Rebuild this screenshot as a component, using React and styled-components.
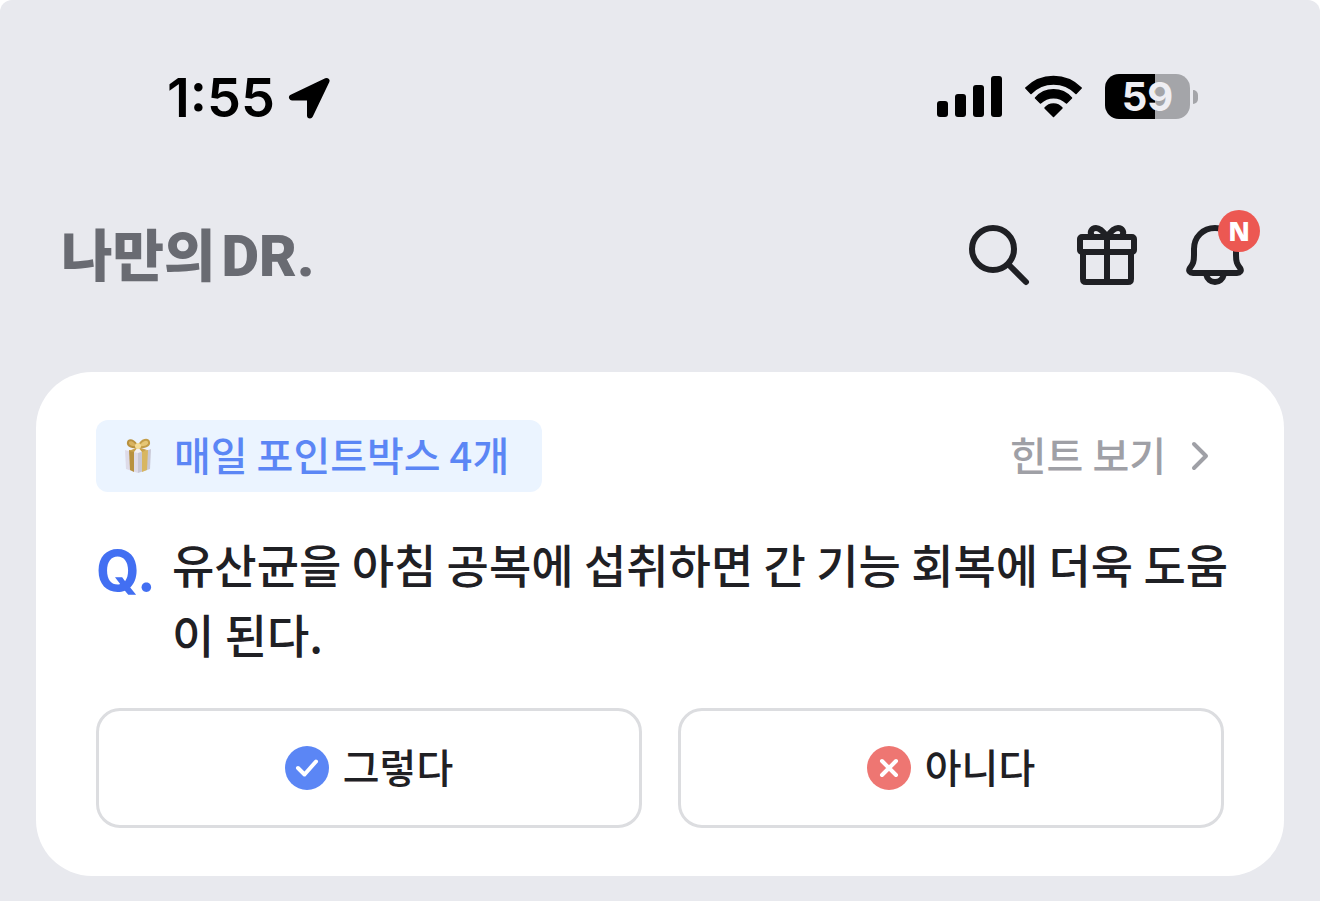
import React from "react";
import styled, { createGlobalStyle } from "styled-components";

const GlobalStyle = createGlobalStyle`
  * { box-sizing: border-box; }
  html { background: #ffffff; }
  body {
    margin: 0;
    font-family: "Noto Sans CJK KR", "Noto Sans", sans-serif;
    color: #1f2024;
  }
  button, a { font-family: inherit; color: inherit; }
`;

const Screen = styled.div`
  min-height: 100vh;
  padding-bottom: 24px;
  background: #e8e9ee;
  border-radius: 12px 12px 0 0;
`;

const StatusBar = styled.div`
  display: flex;
  align-items: flex-start;
  justify-content: space-between;
  padding: 74px 122px 0 167px;
  color: #000000;
`;

const StatusGroup = styled.div`
  display: flex;
  align-items: center;
  gap: ${(p) => p.$gap}px;
`;

const Time = styled.time`
  font: 600 54px/48px Inter, sans-serif;
`;

const Battery = styled.div`
  display: flex;
  align-items: center;
  gap: 3px;
`;

const BatteryBody = styled.div`
  width: 85px;
  border-radius: 14px;
  background: linear-gradient(to right, #000000 59%, #a4a5a9 59%);
  color: #eeeef3;
  font: 700 40px/45px Inter, sans-serif;
  text-align: center;
`;

const BatteryTip = styled.div`
  width: 5px;
  height: 14px;
  border-radius: 0 6px 6px 0;
  background: #a4a5a9;
`;

const Header = styled.header`
  display: flex;
  align-items: center;
  justify-content: space-between;
  height: 72px;
  margin-top: 97px;
  padding: 0 69px 0 61px;
`;

const Wordmark = styled.a`
  display: flex;
  align-items: baseline;
  gap: 6px;
  padding-bottom: 2px;
  color: #696b72;
  text-decoration: none;
  font-size: 56px;
  line-height: 66px;
  font-weight: 900;
`;

const WordmarkLatin = styled.span`
  font-family: Roboto, sans-serif;
  font-size: 58px;
`;

const Actions = styled.nav`
  display: flex;
  gap: 36px;
`;

const IconButton = styled.button`
  position: relative;
  width: 72px;
  height: 72px;
  padding: 0;
  border: 0;
  background: none;
`;

const StrokeIcon = styled.svg`
  display: block;
  fill: none;
  stroke: #1f2024;
  stroke-width: 6;
  stroke-linecap: round;
  stroke-linejoin: round;
`;

const Badge = styled.span`
  position: absolute;
  top: -9px;
  right: -9px;
  width: 42px;
  border-radius: 50%;
  background: #ec5852;
  color: #ffffff;
  font: 800 26px/42px "Open Sans", sans-serif;
  text-align: center;
`;

const Card = styled.main`
  margin: 81px 36px 0;
  padding: 48px 60px;
  border-radius: 56px;
  background: #ffffff;
`;

const CardTop = styled.div`
  display: flex;
  align-items: center;
  justify-content: space-between;
`;

const Label = styled.span`
  padding-bottom: 4px;
  font-size: 40px;
  line-height: 68px;
  font-weight: 500;
`;

const Chip = styled.div`
  display: flex;
  align-items: center;
  gap: 22px;
  padding: 0 33px 0 28px;
  border-radius: 12px;
  background: #ebf4ff;
  color: #5b86f5;
`;

const HintLink = styled.a`
  && { color: #9fa0a6; }
  display: flex;
  align-items: center;
  gap: 24px;
  padding-right: 14px;
  text-decoration: none;
`;

const Question = styled.div`
  display: flex;
  gap: 20px;
  margin: 36px -8px 40px 0;
`;

const QuestionMark = styled.span`
  width: 56px;
  color: #426ff2;
  font: 700 56px/86px Inter, sans-serif;
`;

const QuestionText = styled.h1`
  flex: 1;
  margin: 0;
  font-size: 46px;
  line-height: 70px;
  font-weight: 500;
  word-break: break-all;
`;

const Options = styled.div`
  display: grid;
  grid-template-columns: 1fr 1fr;
  gap: 36px;
`;

const OptionButton = styled.button`
  display: flex;
  align-items: center;
  justify-content: center;
  gap: 14px;
  height: 120px;
  padding: 0;
  border: 3px solid #dcdde0;
  border-radius: 24px;
  background: #ffffff;
`;

const ArrowGlyph = () => (
  <svg width="44" height="44" viewBox="0 0 44 44" aria-hidden="true">
    <path d="M39.5 5 L5 21.5 H23 V39.5 Z" stroke="#000" strokeWidth="6" strokeLinejoin="round" />
  </svg>
);

const SignalGlyph = () => (
  <svg width="65" height="41" viewBox="0 0 65 41" aria-hidden="true">
    <rect x="0" y="25" width="11" height="16" rx="3" />
    <rect x="18" y="18" width="11" height="23" rx="3" />
    <rect x="36" y="9" width="11" height="32" rx="3" />
    <rect x="54" y="0" width="11" height="41" rx="3" />
  </svg>
);

const WifiGlyph = () => (
  <svg width="57" height="43" viewBox="0 0 57 43" stroke="#000" strokeWidth="1.500" strokeLinejoin="round" aria-hidden="true">
    <path d="M.8 13 A39 39 0 0 1 56.2 13 L51 18.4 A31.5 31.5 0 0 0 6 18.4 Z" />
    <path d="M10.5 23 A24 24 0 0 1 46.5 23 L41.5 28 A18.5 18.5 0 0 0 15.5 28 Z" />
    <path d="M20 33 A11 11 0 0 1 37 33 L28.5 41.5 Z" />
  </svg>
);

const SearchGlyph = () => (
  <StrokeIcon width="72" height="72" viewBox="0 0 72 72">
    <circle cx="30" cy="30" r="21" />
    <path d="M45.5 45.5 L63 63" />
  </StrokeIcon>
);

const GiftGlyph = () => (
  <StrokeIcon width="72" height="72" viewBox="0 0 72 72">
    <rect x="9" y="18" width="54" height="15" rx="2" />
    <path d="M12 33 V60 Q12 63 15 63 H57 Q60 63 60 60 V33 M36 18 V63" />
    <path d="M36 18 C32 12 29 9 25 9 C21 9 18 13 21 17 M36 18 C40 12 43 9 47 9 C51 9 54 13 51 17" />
  </StrokeIcon>
);

const BellGlyph = () => (
  <StrokeIcon width="72" height="72" viewBox="0 0 72 72">
    <path d="M36 9 C24 9 15 18 15 30 V36 C15 43 14 45 11 49 C9 52 11 54 14 54 H58 C61 54 63 52 61 49 C58 45 57 43 57 36 V30 C57 18 48 9 36 9 Z" />
    <path d="M27 55 C28 60 32 63 36 63 C40 63 44 60 45 55" />
  </StrokeIcon>
);

const PresentGlyph = () => (
  <svg width="28" height="36" viewBox="0 0 28 36" aria-hidden="true">
    <path d="M1 12 L14 14 V35 L2 31 Z" fill="#dedbe8" />
    <path d="M14 14 L27 11 L26 31 L14 35 Z" fill="#c9c8d6" />
    <path d="M1 12 L14 9 L27 11 L14 15 Z" fill="#f3f1f6" />
    <path d="M5 12 L10 13 V34 L6 32 Z" fill="#b8913f" />
    <path d="M18 13 L24 12 L23 32 L18 34 Z" fill="#d8b661" />
    <path d="M14 9 C10 1 5 1 4 4 C3 8 8 10 14 9 Z" fill="#d9b360" stroke="#b8913f" strokeWidth="2" />
    <path d="M14 9 C18 0 24 1 25 4 C26 8 20 10 14 9 Z" fill="#e6c674" stroke="#c39d48" strokeWidth="2" />
    <path d="M14 9 L5 13 L10 14 Z M14 9 L23 12 L18 14 Z" fill="#c9a24c" />
    <circle cx="14" cy="8" r="3" fill="#f4dc98" />
  </svg>
);

const ChevronGlyph = () => (
  <svg width="20" height="32" viewBox="0 0 20 32" fill="none" stroke="#9fa0a6" strokeWidth="4" strokeLinecap="round" strokeLinejoin="round" aria-hidden="true">
    <path d="M4 4 L16 16 L4 28" />
  </svg>
);

const MarkGlyph = ({ color, d }) => (
  <svg width="44" height="44" viewBox="0 0 44 44" fill="none" aria-hidden="true">
    <circle cx="22" cy="22" r="22" fill={color} />
    <path d={d} stroke="#fff" strokeWidth="4" strokeLinecap="round" strokeLinejoin="round" />
  </svg>
);

const options = [
  { label: "그렇다", color: "#5b86f5", d: "M13 22 L19.5 28.5 L31 15.5" },
  { label: "아니다", color: "#ee7672", d: "M15 15 L29 29 M29 15 L15 29" },
];

export default function App() {
  return (
    <>
      <GlobalStyle />
      <Screen>
        <StatusBar>
          <StatusGroup $gap={12}>
            <Time>1:55</Time>
            <ArrowGlyph />
          </StatusGroup>
          <StatusGroup $gap={23}>
            <SignalGlyph />
            <WifiGlyph />
            <Battery>
              <BatteryBody>59</BatteryBody>
              <BatteryTip />
            </Battery>
          </StatusGroup>
        </StatusBar>
        <Header>
          <Wordmark href="#home">
            나만의<WordmarkLatin>DR.</WordmarkLatin>
          </Wordmark>
          <Actions>
            <IconButton aria-label="검색"><SearchGlyph /></IconButton>
            <IconButton aria-label="선물"><GiftGlyph /></IconButton>
            <IconButton aria-label="알림"><BellGlyph /><Badge>N</Badge></IconButton>
          </Actions>
        </Header>
        <Card>
          <CardTop>
            <Chip><PresentGlyph /><Label>매일 포인트박스 4개</Label></Chip>
            <HintLink href="#hint"><Label>힌트 보기</Label><ChevronGlyph /></HintLink>
          </CardTop>
          <Question>
            <QuestionMark>Q.</QuestionMark>
            <QuestionText>유산균을 아침 공복에 섭취하면 간 기능 회복에 더욱 도움이 된다.</QuestionText>
          </Question>
          <Options>
            {options.map((o) => (
              <OptionButton key={o.label}>
                <MarkGlyph color={o.color} d={o.d} />
                <Label>{o.label}</Label>
              </OptionButton>
            ))}
          </Options>
        </Card>
      </Screen>
    </>
  );
}
